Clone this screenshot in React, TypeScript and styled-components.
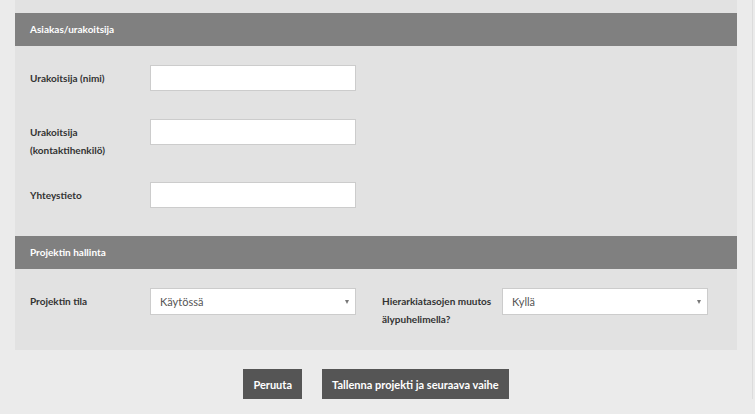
import React from "react";
import styled, { createGlobalStyle } from "styled-components";

const Global = createGlobalStyle`
  html, body { margin: 0; padding: 0; background: #ebebeb; }
  body { font-family: Lato, "Open Sans", sans-serif; color: #333; }
  * { box-sizing: border-box; }
`;

const Frame = styled.div`
  width: 753px;
  padding: 0 15px;
  border-right: 1px solid #dcdcdc;
`;

const Panel = styled.div`
  background: #e2e2e2;
  padding-top: 13px;
`;

const SectionHeader = styled.div`
  height: 33px;
  line-height: 33px;
  background: #808080;
  color: #fff;
  font-weight: 700;
  font-size: 10px;
  padding-left: 15px;
`;

const SectionBody = styled.div<{ $bottom: number; $cols?: number }>`
  padding: 19px 15px ${(p) => p.$bottom}px 15px;
  display: grid;
  grid-template-columns: repeat(${(p) => p.$cols ?? 1}, 326px);
  column-gap: 26px;
  row-gap: 28px;
`;

const Field = styled.div`
  display: grid;
  grid-template-columns: 120px 206px;
  align-items: start;
`;

const Label = styled.div`
  font-size: 10px;
  font-weight: 700;
  color: #333;
  line-height: 18px;
  padding-top: 4px;
  margin-bottom: -5px;
  white-space: nowrap;
`;

const TextInput = styled.input`
  height: 26px;
  width: 206px;
  border: 1px solid #cccccc;
  background: #fff;
  padding: 0 9px;
  font-family: inherit;
  font-size: 11px;
  outline: none;
`;

const SelectBox = styled.div`
  position: relative;
  height: 27px;
  width: 206px;
  border: 1px solid #cccccc;
  background: #fff;
  padding: 0 9px;
  font-size: 11px;
  line-height: 25px;
  color: #555;
`;

const Caret = styled.span`
  position: absolute;
  right: 6px;
  top: 11px;
  width: 0;
  height: 0;
  border-left: 2.5px solid transparent;
  border-right: 2.5px solid transparent;
  border-top: 4px solid #777;
`;

const Actions = styled.div`
  display: flex;
  justify-content: center;
  gap: 20px;
  padding-top: 19px;
`;

const Button = styled.button`
  height: 30px;
  padding: 0 10px;
  border: none;
  background: #555555;
  color: #fff;
  font-family: inherit;
  font-weight: 700;
  font-size: 11px;
  cursor: pointer;
`;

const Select: React.FC<{ value: string }> = ({ value }) => (
  <SelectBox>
    {value}
    <Caret />
  </SelectBox>
);

export default function App() {
  return (
    <>
      <Global />
      <Frame>
        <Panel>
          <SectionHeader>Asiakas/urakoitsija</SectionHeader>
          <SectionBody $bottom={28}>
            <Field>
              <Label>Urakoitsija (nimi)</Label>
              <TextInput />
            </Field>
            <Field>
              <Label>
                Urakoitsija
                <br />
                (kontaktihenkilö)
              </Label>
              <TextInput />
            </Field>
            <Field>
              <Label>Yhteystieto</Label>
              <TextInput />
            </Field>
          </SectionBody>
          <SectionHeader>Projektin hallinta</SectionHeader>
          <SectionBody $bottom={27} $cols={2}>
            <Field>
              <Label>Projektin tila</Label>
              <Select value="Käytössä" />
            </Field>
            <Field>
              <Label>
                Hierarkiatasojen muutos
                <br />
                älypuhelimella?
              </Label>
              <Select value="Kyllä" />
            </Field>
          </SectionBody>
        </Panel>
        <Actions>
          <Button>Peruuta</Button>
          <Button>Tallenna projekti ja seuraava vaihe</Button>
        </Actions>
      </Frame>
    </>
  );
}
